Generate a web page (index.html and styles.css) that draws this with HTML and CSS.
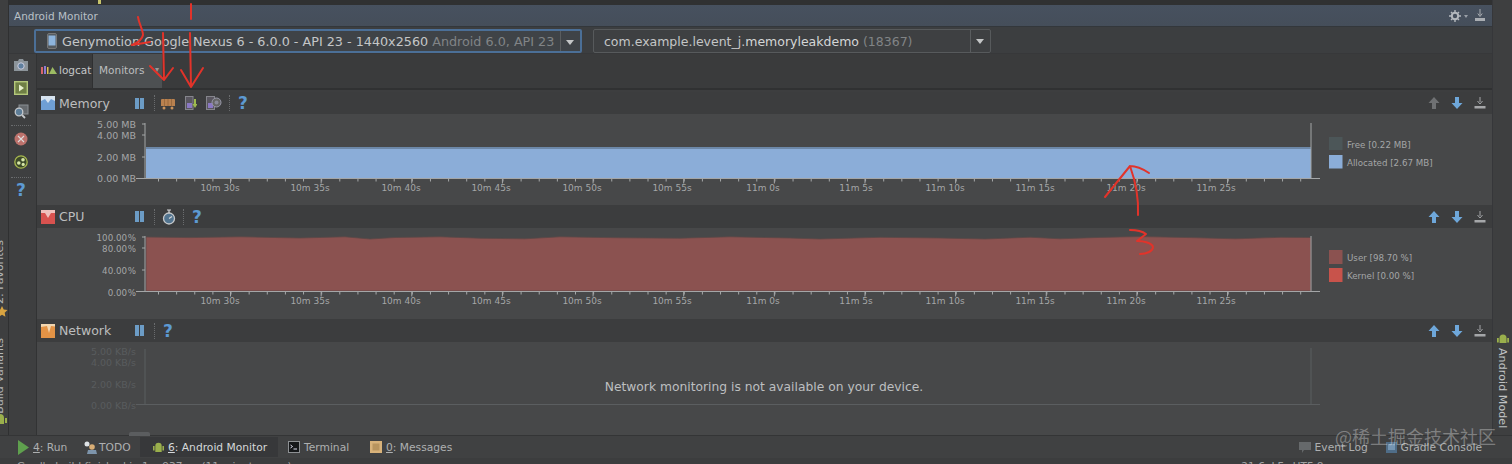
FILE: index.html
```html
<!DOCTYPE html>
<html lang="en">
<head>
<meta charset="utf-8">
<title>Android Monitor</title>
<link rel="stylesheet" href="styles.css">
</head>
<body>
<div class="app">
  <div class="upper">
    <aside class="stripe-left">
      <div class="vtab vtab-fav">2: Favorites</div>
      <svg class="star" width="9" height="12" viewBox="0 0 9 12"><path d="M2 1l1.7 3.6 3.8.5-2.8 2.7.7 3.9L2 9.800-1.400 11.700-.7 7.800-3.500 5.100.3 4.600z" fill="#d9a441"/></svg>
      <div class="vtab vtab-build">Build Variants</div>
      <svg class="stripe-droid" width="9" height="12" viewBox="0 0 9 12"><path d="M-4 4a4 4 0 0 1 8 0v6h-8zM5 4h2v5H5z" fill="#9aaf4c"/></svg>
    </aside>
    <div class="center">
      <div class="strip"><span class="strip-num">81</span><span class="strip-mark"></span></div>
      <header class="title">
        <span>Android Monitor</span>
        <span class="title-icons">
          <svg width="20" height="12" viewBox="0 0 20 12"><circle cx="6" cy="6" r="3.200" fill="none" stroke="#b4b8bd" stroke-width="2"/><path d="M6 0v2M6 10v2M0 6h2M10 6h2M2 2l1.500 1.500M8.500 8.500L10 10M2 10l1.500-1.500M8.500 3.500L10 2" stroke="#b4b8bd" stroke-width="1.400"/><path d="M15 5h4l-2 3z" fill="#99a0a8"/></svg>
          <svg width="12" height="13" viewBox="0 0 12 13"><path d="M6 0v6M3.800 4.500L6 7.500l2.200-3" stroke="#a9adb2" fill="none"/><rect x="1" y="9" width="10" height="3" fill="#a9adb2"/></svg>
        </span>
      </header>
      <div class="device-row">
        <div class="combo combo-device">
          <svg width="10" height="16" viewBox="0 0 10 16"><rect x=".5" y=".5" width="9" height="15" rx="1.500" fill="#555b60" stroke="#777"/><rect x="1.500" y="2.500" width="7" height="10" fill="#8db4dc"/></svg>
          <span class="combo-text">Genymotion Google Nexus 6 - 6.0.0 - API 23 - 1440x2560 <em>Android 6.0, API 23</em></span>
          <span class="combo-arrow"></span>
        </div>
        <div class="combo combo-app">
          <span class="combo-text">com.example.levent_j.<b>memoryleakdemo</b> <em>(18367)</em></span>
          <span class="combo-arrow"></span>
        </div>
      </div>
      <div class="lower">
        <nav class="tools">
          <svg width="16" height="14" viewBox="0 0 16 14"><path d="M1 3h4l1-2h4l1 2h4v10H1z" fill="#8c949a"/><circle cx="8" cy="8" r="3.200" fill="#5f7f9e" stroke="#ccd"/></svg>
          <svg width="14" height="14" viewBox="0 0 14 14"><rect x=".7" y=".7" width="12.600" height="12.600" fill="#6f7f45" stroke="#b3c77a" stroke-width="1.400"/><path d="M5 3.500l5 3.500-5 3.500z" fill="#e6efcc"/></svg>
          <svg width="16" height="16" viewBox="0 0 16 16"><rect x="6" y="1" width="9" height="9" fill="#666a6e" stroke="#8a8f93"/><circle cx="6" cy="8" r="3.800" fill="#5d7d97" stroke="#c4c8cc" stroke-width="1.300"/><path d="M9 11l3 3" stroke="#c4c8cc" stroke-width="1.800"/></svg>
          <i class="dots dots-first"></i>
          <svg width="14" height="14" viewBox="0 0 14 14"><circle cx="7" cy="7" r="6.500" fill="#bd726c"/><path d="M4 4l6 6M10 4l-6 6" stroke="#ddd" stroke-width="1.100"/></svg>
          <svg width="14" height="14" viewBox="0 0 14 14"><circle cx="7" cy="7" r="6.200" fill="#3d4a2a" stroke="#a8b84f" stroke-width="1.300"/><circle cx="4.800" cy="8" r="1.800" fill="#d7e6a8"/><circle cx="9" cy="4.800" r="1.800" fill="#d7e6a8"/><circle cx="9.200" cy="9.400" r="1.600" fill="#d7e6a8"/></svg>
          <i class="dots"></i>
          <span class="help tool-help">?</span>
        </nav>
        <div class="monitors">
          <div class="tabs">
            <div class="tab">
              <svg width="16" height="10" viewBox="0 0 16 10"><rect y="2" width="2" height="7" fill="#d9666b"/><rect x="3" y="1" width="2" height="8" fill="#8d7bd1"/><rect x="6" y="2" width="1.500" height="7" fill="#e0c04f"/><path d="M8 9l3.500-7L16 9z" fill="#9cbb63"/></svg>
              logcat
            </div>
            <div class="tab tab-on">Monitors<span class="tab-close">▾</span></div>
          </div>

          <section class="panel">
            <div class="panel-head head-mem">
              <svg class="kind" width="14" height="14" viewBox="0 0 14 14"><rect width="14" height="14" fill="#6f9fd4"/><path d="M0 0h14v5L10 3 7 7 4 3 0 5z" fill="#d7e3ef"/></svg>
              <span class="panel-name">Memory</span>
              <span class="pause"></span><i class="vdots"></i>
              <svg class="tool-ic first-wide" width="16" height="13" viewBox="0 0 16 13"><path d="M1 3a1 1 0 0 1 1-1h12a1 1 0 0 1 1 1v6H1z" fill="#b9814f"/><path d="M4.500 2v7M8 2v7M11.500 2v7" stroke="#93663b" stroke-width=".8"/><circle cx="4" cy="11" r="1.500" fill="#c9925c"/><circle cx="12" cy="11" r="1.500" fill="#c9925c"/></svg>
              <svg class="tool-ic" width="12" height="14" viewBox="0 0 12 14"><rect x=".5" y=".5" width="7.500" height="13" fill="#59565f" stroke="#85858c"/><rect x="2" y="7" width="5" height="5" fill="#8a78c4"/><path d="M10 3v6" stroke="#9dbb4e" stroke-width="2"/><path d="M7.500 8h5L10 12z" fill="#9dbb4e"/></svg>
              <svg class="tool-ic" width="16" height="14" viewBox="0 0 16 14"><rect x=".5" y=".5" width="8" height="13" fill="#59565f" stroke="#85858c"/><rect x="2" y="7" width="5" height="5" fill="#8a78c4"/><circle cx="10.500" cy="6.500" r="4.500" fill="#666" stroke="#99a"/><circle cx="10.500" cy="6.500" r="2" fill="#8a8a99"/></svg>
              <i class="vdots"></i>
              <span class="help">?</span>
              <span class="arrows">
                <svg width="12" height="12" viewBox="0 0 12 12"><path d="M6 0l5.500 6H8v6H4V6H.5z" fill="#6f7173"/></svg>
                <svg width="12" height="12" viewBox="0 0 12 12"><path d="M6 12L.5 6H4V0h4v6h3.500z" fill="#6ea7da"/></svg>
                <svg width="12" height="12" viewBox="0 0 12 12"><path d="M6 0v5M3.500 4L6 7l2.500-3" stroke="#a5a7a9" fill="none"/><rect x=".5" y="9" width="11" height="2.500" fill="#a5a7a9"/></svg>
              </span>
            </div>
            <div class="panel-body panel-mem">
              <svg class="chart" width="1455" height="91" viewBox="37 114 1455 91">
                <rect class="free" x="146" y="147" width="1165" height="2"/>
                <rect class="alloc" x="146" y="149" width="1165" height="29"/>
                <path class="axis" d="M145 123V178.500M142 124H145M142 135H145M142 157H145M136 178.500H1320M1311 123V178"/>
                <path class="tick" stroke-dasharray="1 17.130" d="M158 180H1310"/>
                <path class="tick major" stroke-dasharray="1 89.640" d="M230 181H1310"/>
                <g class="ylabel">
                  <text x="136" y="128">5.00 MB</text><text x="136" y="139">4.00 MB</text><text x="136" y="161">2.00 MB</text><text x="136" y="182">0.00 MB</text>
                </g>
                <g class="xlabel">
                  <text x="220" y="191">10m 30s</text><text x="310" y="191">10m 35s</text><text x="401" y="191">10m 40s</text><text x="491" y="191">10m 45s</text><text x="582" y="191">10m 50s</text><text x="672" y="191">10m 55s</text><text x="763" y="191">11m 0s</text><text x="856" y="191">11m 5s</text><text x="945" y="191">11m 10s</text><text x="1035" y="191">11m 15s</text><text x="1126" y="191">11m 20s</text><text x="1216" y="191">11m 25s</text>
                </g>
                <rect class="sw-free" x="1329" y="137" width="13.500" height="13"/>
                <rect class="alloc" x="1329" y="155" width="13.500" height="13.500"/>
                <text class="legend" x="1347" y="148">Free [0.22 MB]</text>
                <text class="legend" x="1347" y="166">Allocated [2.67 MB]</text>
              </svg>
            </div>
          </section>

          <section class="panel">
            <div class="panel-head">
              <svg class="kind" width="14" height="14" viewBox="0 0 14 14"><rect width="14" height="14" fill="#d8524f"/><path d="M0 0h14v3L10 3 7 8 4 3H0z" fill="#efc0bc"/></svg>
              <span class="panel-name">CPU</span>
              <span class="pause"></span><i class="vdots"></i>
              <svg class="tool-ic first-narrow" width="14" height="16" viewBox="0 0 14 16"><circle cx="7" cy="9.500" r="5.500" fill="#52748f" stroke="#c6c8ca" stroke-width="1.300"/><path d="M7 1v3M5 1h4M7 9.500l3-2" stroke="#d3d5d7" stroke-width="1.200"/></svg>
              <i class="vdots"></i>
              <span class="help">?</span>
              <span class="arrows">
                <svg width="12" height="12" viewBox="0 0 12 12"><path d="M6 0l5.500 6H8v6H4V6H.5z" fill="#6ea7da"/></svg>
                <svg width="12" height="12" viewBox="0 0 12 12"><path d="M6 12L.5 6H4V0h4v6h3.500z" fill="#6ea7da"/></svg>
                <svg width="12" height="12" viewBox="0 0 12 12"><path d="M6 0v5M3.500 4L6 7l2.500-3" stroke="#a5a7a9" fill="none"/><rect x=".5" y="9" width="11" height="2.500" fill="#a5a7a9"/></svg>
              </span>
            </div>
            <div class="panel-body panel-cpu">
              <svg class="chart" width="1455" height="91" viewBox="37 228 1455 91">
                <path class="user user-edge" d="M146 291V237L190 237.600 240 236.800 300 238 345 236.800 370 239 395 237.500 440 236.800 480 238.200 525 238.800 560 236.800 620 237.800 680 238.200 730 236.800 790 238 820 239 880 237.300 940 238 985 239 1030 237.200 1060 238.800 1100 237.400 1140 236.600 1190 237.600 1235 238.800 1280 237.300 1311 237.500V291z"/>
                <path class="axis" d="M145 236V291.500M142 237H145M142 248H145M142 270H145M136 291.500H1320M1311 236V291"/>
                <path class="tick" stroke-dasharray="1 17.130" d="M158 293H1310"/>
                <path class="tick major" stroke-dasharray="1 89.640" d="M230 294H1310"/>
                <g class="ylabel pct">
                  <text x="136" y="240.500">100.00 %</text><text x="136" y="251.500">80.00 %</text><text x="136" y="274">40.00 %</text><text x="136" y="295.500">0.00 %</text>
                </g>
                <g class="xlabel">
                  <text x="220" y="304">10m 30s</text><text x="310" y="304">10m 35s</text><text x="401" y="304">10m 40s</text><text x="491" y="304">10m 45s</text><text x="582" y="304">10m 50s</text><text x="672" y="304">10m 55s</text><text x="763" y="304">11m 0s</text><text x="856" y="304">11m 5s</text><text x="945" y="304">11m 10s</text><text x="1035" y="304">11m 15s</text><text x="1126" y="304">11m 20s</text><text x="1216" y="304">11m 25s</text>
                </g>
                <rect class="user" x="1329" y="250" width="13.500" height="14"/>
                <rect class="kernel" x="1329" y="268" width="13.500" height="14"/>
                <text class="legend" x="1347" y="261">User [98.70 %]</text>
                <text class="legend" x="1347" y="279">Kernel [0.00 %]</text>
              </svg>
            </div>
          </section>

          <section class="panel">
            <div class="panel-head">
              <svg class="kind" width="14" height="14" viewBox="0 0 14 14"><rect width="14" height="14" fill="#e39346"/><path d="M0 0h14v2.500L10 2 8 9 6 2 0 3z" fill="#f2d6b0"/></svg>
              <span class="panel-name">Network</span>
              <span class="pause"></span><i class="vdots"></i>
              <span class="help">?</span>
              <span class="arrows">
                <svg width="12" height="12" viewBox="0 0 12 12"><path d="M6 0l5.500 6H8v6H4V6H.5z" fill="#6ea7da"/></svg>
                <svg width="12" height="12" viewBox="0 0 12 12"><path d="M6 12L.5 6H4V0h4v6h3.500z" fill="#6ea7da"/></svg>
                <svg width="12" height="12" viewBox="0 0 12 12"><path d="M6 0v5M3.500 4L6 7l2.500-3" stroke="#a5a7a9" fill="none"/><rect x=".5" y="9" width="11" height="2.500" fill="#a5a7a9"/></svg>
              </span>
            </div>
            <div class="panel-body panel-net">
              <svg class="chart" width="1455" height="93" viewBox="37 342 1455 93">
                <path class="axis-dim" d="M145 349V404.500M136 404.500H1320M1311 348V404"/>
                <g class="ylabel dim">
                  <text x="136" y="355">5.00 KB/s</text><text x="136" y="366">4.00 KB/s</text><text x="136" y="388">2.00 KB/s</text><text x="136" y="409">0.00 KB/s</text>
                </g>
                <text class="netmsg" x="764" y="391">Network monitoring is not available on your device.</text>
              </svg>
            </div>
          </section>
        </div>
      </div>
    </div>
    <aside class="stripe-right">
      <svg width="12" height="13" viewBox="0 0 12 13"><path d="M2.500 5a3.500 3.500 0 0 1 7 0v5h-7zM0 5h1.800v4.500H0zM10.200 5H12v4.500h-1.800z" fill="#9aaf4c"/></svg>
      <div class="vtab-right">Android Model</div>
    </aside>
  </div>

  <footer class="bottom">
    <div class="bar-item item-run">
      <svg width="12" height="15" viewBox="0 0 12 15"><path d="M1 0l11 7.500L1 15z" fill="#5fa04e"/></svg>
      <span><u>4</u>: Run</span>
    </div>
    <div class="bar-item item-todo">
      <svg width="13" height="13" viewBox="0 0 13 13"><circle cx="3" cy="3" r="2.500" fill="#dfe3e6"/><circle cx="8" cy="6" r="2.800" fill="#d9ae76"/><path d="M3 13l1-4h8l1 4z" fill="#7d94ab"/></svg>
      <span>TODO</span>
    </div>
    <div class="bar-item item-active">
      <svg width="11" height="13" viewBox="0 0 11 13"><path d="M2.300 5a3.200 3.200 0 0 1 6.400 0v6H2.300zM0 5h1.600v4.500H0zM9.400 5H11v4.500H9.400z" fill="#9aaf4c"/></svg>
      <span><u>6</u>: Android Monitor</span>
    </div>
    <div class="bar-item item-term">
      <svg width="12" height="12" viewBox="0 0 12 12"><rect x=".5" y=".5" width="11" height="11" fill="#16181a" stroke="#8d9093"/><path d="M2.500 4l2 1.500-2 1.500M5.500 8H9" stroke="#dde" fill="none"/></svg>
      <span>Terminal</span>
    </div>
    <div class="bar-item item-msg">
      <svg width="12" height="12" viewBox="0 0 12 12"><rect width="12" height="12" fill="#d8b27a"/><rect x="2.500" y="2.500" width="7" height="7" fill="#b8945e"/></svg>
      <span><u>0</u>: Messages</span>
    </div>
    <div class="bar-right">
      <div class="bar-item item-log">
        <svg width="12" height="11" viewBox="0 0 12 11"><path d="M0 0h12v8H5l-2 3V8H0z" fill="#66696b"/></svg>
        <span>Event Log</span>
      </div>
      <div class="bar-item item-gradle">
        <svg width="11" height="11" viewBox="0 0 11 11"><rect width="11" height="11" fill="#4f6d88"/><rect x="2" y="2" width="7" height="6" fill="#7595b2"/></svg>
        <span>Gradle Console</span>
      </div>
    </div>
  </footer>
  <div class="status">
    <span>Gradle build finished in 1m 937ms (11 minutes ago)</span>
    <span class="status-right">21:6  LF:  UTF-8:</span>
  </div>

  <div class="knob"></div>
  <div class="watermark">@稀土掘金技术社区</div>
  <svg class="ink" width="1512" height="464" viewBox="0 0 1512 464">
    <path d="M138 17C139 24 143 30 143 35C142 40 137 43 132 45M132 45L150 42"/>
    <path d="M163 33L164 80M150 66L164 80L173 68"/>
    <path d="M191 4V19M190 33L191 87M181 70L191 87L203 68"/>
    <path d="M1105 197L1130 166M1130 166C1137 166 1143 169 1149 173M1130 166C1135 180 1139 195 1138 215"/>
    <path d="M1130 230C1136 230 1142 231 1146 234L1137 241C1144 241 1152 243 1153 247C1153 251 1147 254 1140 254"/>
  </svg>
</div>
</body>
</html>
```

FILE: styles.css
```css
* { box-sizing: border-box; }
html, body { margin: 0; padding: 0; background: #3c3e3f; }
.app {
  position: relative;
  width: 1512px;
  height: 464px;
  overflow: hidden;
  display: flex;
  flex-direction: column;
  font-family: "DejaVu Sans", "Liberation Sans", sans-serif;
  color: #b8babb;
}
.upper { display: flex; height: 435px; }

.stripe-left {
  position: relative;
  width: 9px;
  background: #3e3f40;
  border-right: 1px solid #2f3031;
  overflow: hidden;
  flex: none;
}
.vtab {
  position: absolute;
  left: -7px;
  writing-mode: vertical-rl;
  transform: rotate(180deg);
  font-size: 11px;
  line-height: 13px;
  color: #b4b6b7;
}
.vtab-fav { top: 240px; }
.vtab-build { top: 338px; }
.star { position: absolute; left: 0; top: 305px; }
.stripe-droid { position: absolute; left: 0; top: 414px; }

.center { flex: 1; display: flex; flex-direction: column; min-width: 0; }
.strip { height: 5px; background: #303132; overflow: hidden; position: relative; font-size: 9px; color: #888; }
.strip-num { position: absolute; left: 6px; top: -8px; }
.strip-mark { position: absolute; left: 89px; top: 0; width: 3px; height: 4px; background: #c7c46b; }
.title {
  height: 21px;
  padding: 0 6px 0 5px;
  display: flex;
  align-items: center;
  justify-content: space-between;
  background: linear-gradient(#47515f, #454e5a);
  font-size: 10.500px;
  color: #b9c0c7;
}
.title-icons { display: flex; align-items: center; gap: 5px; }

.device-row {
  height: 28px;
  padding: 2px 0 0 25px;
  display: flex;
  gap: 11px;
  background: #3c3e40;
  border-top: 1px solid #33373b;
  border-bottom: 1px solid #37383a;
}
.combo {
  height: 24px;
  display: flex;
  align-items: center;
  background: #3e4042;
  border: 1px solid #575a5c;
  border-radius: 2px;
  font-size: 12.750px;
  color: #c4c6c7;
}
.combo-device { width: 548px; padding-left: 11px; border: 2px solid #4b6f97; background: #3f4347; }
.combo-app { width: 398px; padding-left: 10px; font-size: 12.500px; }
.combo-text { flex: 1; white-space: pre; }
.combo-device .combo-text { margin-left: 5px; }
.combo em { font-style: normal; color: #818486; }
.combo b { font-weight: 400; color: #d4d6d7; }
.combo-arrow {
  position: relative;
  width: 20px;
  height: 100%;
  border-left: 1px solid #5a5d5f;
  flex: none;
}
.combo-arrow::after {
  content: "";
  position: absolute;
  left: 5px;
  top: 9px;
  border: 4px solid transparent;
  border-top: 5px solid #c4c6c7;
  border-bottom: 0;
}

.lower { flex: 1; display: flex; min-height: 0; }
.tools {
  width: 28px;
  flex: none;
  padding: 4px 3px 0 0;
  display: flex;
  flex-direction: column;
  align-items: center;
  gap: 9px;
  background: #3e3f40;
  border-right: 1px solid #323334;
}
.dots { width: 20px; border-top: 1px dotted #6a6c6e; margin: -1px 0 -3px; }
.dots-first { margin-top: -4px; }
.help {
  font: 700 17px/20px "DejaVu Sans", sans-serif;
  color: #5d9ad2;
}
.tool-help { margin-top: -4px; }

.monitors { flex: 1; display: flex; flex-direction: column; min-width: 0; background: #3d3e3f; }
.tabs {
  height: 36px;
  flex: none;
  display: flex;
  background: #3a3b3c;
  border-bottom: 2px solid #303132;
  margin-bottom: 2px;
}
.tab {
  display: flex;
  align-items: center;
  gap: 2px;
  width: 56px;
  padding: 0 0 2px 4px;
  font-size: 10.500px;
  color: #c4c6c7;
  border-right: 1px solid #2f3031;
}
.tab-on { width: 69px; padding-left: 6px; background: #4d5052; position: relative; color: #bcbebf; border: 0; }
.tab-close { position: absolute; right: 3px; top: 11px; font-size: 8px; color: #999; }

.panel { display: flex; flex-direction: column; flex: none; }
.panel-head {
  height: 23px;
  display: flex;
  align-items: center;
  padding-left: 4px;
  background: #3c3d3e;
}
.head-mem { height: 22px; }
.panel-name { width: 80px; padding-left: 4px; font-size: 12.500px; color: #bcbebf; }
.kind { flex: none; }
.pause {
  width: 9px;
  height: 11px;
  flex: none;
  background: linear-gradient(90deg, #6c9cc6 0 40%, transparent 40% 60%, #6c9cc6 60%);
}
.vdots { width: 0; height: 16px; border-left: 1px dotted #6a6c6e; margin: 0 8px 0 10px; flex: none; }
.tool-ic { margin-right: 9px; flex: none; }
.tool-ic + .vdots { margin-left: -2px; }
.first-wide { margin-left: -3px; }
.first-narrow { margin-left: -1px; }
.arrows { margin-left: auto; padding-right: 6px; display: flex; gap: 11px; }
.panel-body { background: #474849; }
.panel-mem, .panel-cpu { height: 91px; }
.panel-net { height: 93px; }
.chart { display: block; }
.free { fill: #6d88a8; }
.alloc { fill: #8badd8; }
.sw-free { fill: #4c5658; }
.user { fill: #8b5250; }
.user-edge { stroke: #5c4846; stroke-width: .8; }
.kernel { fill: #c8534b; }
.axis { fill: none; stroke: #a4a6a7; stroke-width: 1; }
.axis-dim { fill: none; stroke: #5b5e60; stroke-width: 1; }
.tick { fill: none; stroke: #a6a8a9; stroke-width: 3; }
.major { stroke-width: 5; }
.ylabel text { text-anchor: end; font-size: 9.500px; fill: #a4a6a7; }
.ylabel.pct text { font-size: 8.700px; word-spacing: -2px; }
.ylabel.dim text { fill: #595c5e; }
.xlabel text { text-anchor: middle; font-size: 9px; fill: #a4a6a7; }
.legend { font-size: 8.700px; fill: #a4a6a7; }
.netmsg { text-anchor: middle; font-size: 12.300px; fill: #bdbfc0; }

.stripe-right {
  width: 20px;
  flex: none;
  padding-top: 333px;
  display: flex;
  flex-direction: column;
  align-items: center;
  gap: 2px;
  background: #3e3f40;
  border-left: 1px solid #36373a;
}
.vtab-right {
  writing-mode: vertical-rl;
  font-size: 11px;
  color: #bfc1c2;
  letter-spacing: .1px;
}

.bottom {
  height: 23px;
  display: flex;
  align-items: center;
  padding-left: 17px;
  background: #404142;
  border-top: 1px solid #343536;
  font-size: 10.700px;
  color: #aeb0b1;
}
.bar-item { display: flex; align-items: center; gap: 4px; flex: none; white-space: pre; }
.item-run { width: 67px; }
.item-todo { width: 56px; gap: 2px; }
.item-active {
  width: 138px;
  height: 20px;
  padding-left: 13px;
  background: #37383a;
  color: #d6d8d9;
  margin-right: 10px;
}
.item-term { width: 82px; }
.item-msg { width: 90px; }
.bar-right { margin-left: auto; display: flex; padding-right: 30px; }
.item-log { width: 87px; }
.status {
  height: 6px;
  display: flex;
  justify-content: space-between;
  padding: 2px 185px 0 17px;
  background: #3c3d3e;
  font-size: 10.500px;
  line-height: 12px;
  color: #a0a2a3;
  overflow: hidden;
}
.status-right { white-space: pre; }
.knob {
  position: absolute;
  left: 129px;
  top: 432px;
  width: 21px;
  height: 4px;
  background: #5b5d5f;
  border-radius: 2px 2px 0 0;
}
.watermark {
  position: absolute;
  left: 1335px;
  top: 424px;
  font-family: "Noto Sans CJK SC", sans-serif;
  font-size: 18px;
  line-height: 24px;
  color: rgba(255, 255, 255, .32);
  white-space: nowrap;
}
.ink {
  position: absolute;
  left: 0;
  top: 0;
  fill: none;
  stroke: #e2332a;
  stroke-width: 2;
  stroke-linecap: round;
  stroke-linejoin: round;
  pointer-events: none;
}
```
